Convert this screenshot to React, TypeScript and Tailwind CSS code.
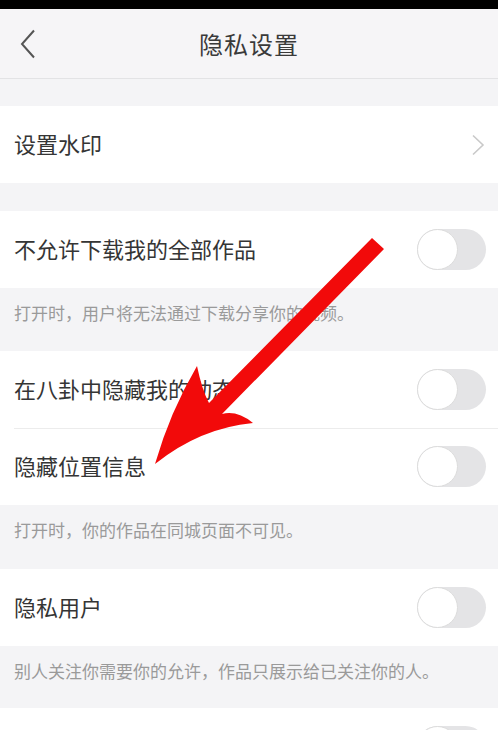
import React from "react";

const font = { fontFamily: '"Noto Sans CJK SC", "Noto Sans", sans-serif' };

const Toggle: React.FC = () => (
  <div className="relative h-[41px] w-[69px] rounded-full bg-[#e4e4e6]">
    <div className="absolute left-0 top-0 h-[41px] w-[41px] rounded-full border border-[#dcdcdc] bg-white" />
  </div>
);

interface RowProps {
  label: string;
  right?: "toggle" | "chevron";
  divider?: boolean;
}

const Row: React.FC<RowProps> = ({ label, right = "toggle", divider }) => (
  <div className="relative flex h-[77px] items-center justify-between bg-white pl-[14px] pr-[12px]">
    {divider && (
      <div className="absolute left-[14px] right-0 top-0 h-px bg-[#ececec]" />
    )}
    <span className="-mt-[3px] text-[22px] leading-none text-[#353535]">{label}</span>
    {right === "toggle" ? (
      <Toggle />
    ) : (
      <svg width="14" height="22" viewBox="0 0 14 22" className="mr-[1px]">
        <path d="M2 1.5 L12 11 L2 20.5" fill="none" stroke="#c9c9c9" strokeWidth="1.6" />
      </svg>
    )}
  </div>
);

const Desc: React.FC<{ text: string; h: string }> = ({ text, h }) => (
  <div className={`${h} bg-[#f4f4f6] pl-[14px] pt-[13px]`}>
    <span className="text-[17px] leading-6 text-[#9a9a9a]">{text}</span>
  </div>
);

export default function App() {
  return (
    <div className="relative h-[730px] w-[498px] overflow-hidden bg-[#f4f4f6]" style={font}>
      {/* status bar */}
      <div className="h-[9px] bg-black" />
      {/* header */}
      <div className="relative flex h-[70px] items-center justify-center border-b border-[#e3e3e5] bg-[#f6f5f7]">
        <svg
          width="18"
          height="30"
          viewBox="0 0 18 30"
          className="absolute left-[19px] top-[20px]"
        >
          <path d="M15 1.5 L3 15 L15 28.5" fill="none" stroke="#555" strokeWidth="2" />
        </svg>
        <span className="text-[24px] leading-none tracking-[1px] text-[#3a3a3a]">隐私设置</span>
      </div>

      <div className="h-[27px]" />
      <Row label="设置水印" right="chevron" />
      <div className="h-[28px]" />
      <Row label="不允许下载我的全部作品" />
      <Desc h="h-[63px]" text="打开时，用户将无法通过下载分享你的视频。" />
      <Row label="在八卦中隐藏我的动态" />
      <Row label="隐藏位置信息" divider />
      <Desc h="h-[64px]" text="打开时，你的作品在同城页面不可见。" />
      <Row label="隐私用户" />
      <Desc h="h-[62px]" text="别人关注你需要你的允许，作品只展示给已关注你的人。" />
      <Row label="" />

      {/* red annotation arrow */}
      <svg
        className="pointer-events-none absolute left-0 top-0"
        width="498"
        height="730"
        viewBox="0 0 498 730"
      >
        <path
          d="M372 238 L384 249 L222 414 Q237 410 253 423 Q200 428 155 464 Q170 412 197 366 Q202 390 209 403 Z"
          fill="#f20a0a"
        />
      </svg>
    </div>
  );
}
